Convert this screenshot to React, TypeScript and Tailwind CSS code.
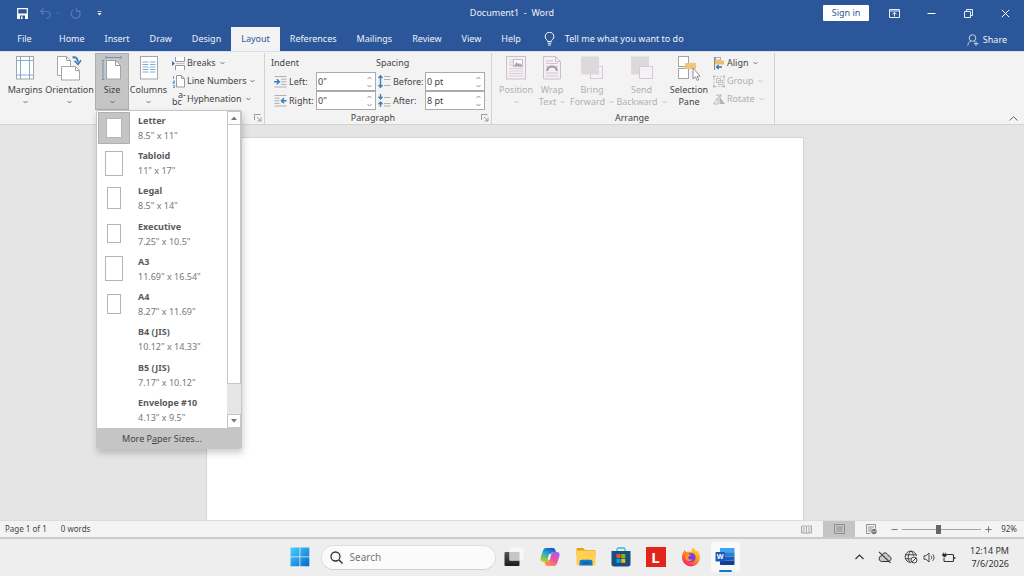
import React from 'react'

const tabsBefore = ['Home', 'Insert', 'Draw', 'Design']
const tabsAfter = ['References', 'Mailings', 'Review', 'View', 'Help']

const paperSizes = [
  { name: 'Letter', size: '8.5" x 11"', icon: 'w-[16px] h-[20px]' },
  { name: 'Tabloid', size: '11" x 17"', icon: 'w-[18px] h-[25px]' },
  { name: 'Legal', size: '8.5" x 14"', icon: 'w-[14px] h-[22px]' },
  { name: 'Executive', size: '7.25" x 10.5"', icon: 'w-[14px] h-[19px]' },
  { name: 'A3', size: '11.69" x 16.54"', icon: 'w-[18px] h-[25px]' },
  { name: 'A4', size: '8.27" x 11.69"', icon: 'w-[14px] h-[20px]' },
  { name: 'B4 (JIS)', size: '10.12" x 14.33"', icon: '' },
  { name: 'B5 (JIS)', size: '7.17" x 10.12"', icon: '' },
  { name: 'Envelope #10', size: '4.13" x 9.5"', icon: '' },
]

const Chevron: React.FC<{ up?: boolean }> = ({ up }) => (
  <svg width="5" height="4" viewBox="0 0 5 4" fill="none" stroke="currentColor" strokeWidth="0.7" className="shrink-0">
    <path d={up ? 'M0.5 3 2.5 1 4.5 3' : 'M0.5 1 2.5 3 4.5 1'} />
  </svg>
)

const Launcher: React.FC<{ label: string }> = ({ label }) => (
  <button aria-label={label}>
    <svg width="8" height="8" viewBox="0 0 8 8" fill="none" stroke="#888" strokeWidth="0.8">
      <path d="M0.5 6V0.5H6.5M3 3 7 7M7 3.5V7H3.5" />
    </svg>
  </button>
)

type BigProps = {
  lines: string[]
  icon: React.ReactNode
  width: string
  disabled?: boolean
  active?: boolean
  arrow?: boolean
}

const BigButton: React.FC<BigProps> = ({ lines, icon, width, disabled, active, arrow = true }) => (
  <button
    disabled={disabled}
    className={`flex h-[57px] flex-col items-center whitespace-nowrap pt-[3px] leading-[12px] ${width} ${disabled ? 'text-[#b1b1b1]' : 'text-[#444]'} ${active ? 'bg-[#c5c5c5] outline -outline-offset-1 outline-[#adadad]' : ''}`}
  >
    <span className="mb-1 flex h-[24px] items-center">{icon}</span>
    <span>{lines[0]}</span>
    <span className="flex h-[12px] items-center gap-[4px]">
      {lines[1]}
      {arrow && <Chevron />}
    </span>
  </button>
)

const SmallButton: React.FC<{ label: string; icon: React.ReactNode; disabled?: boolean }> = ({ label, icon, disabled }) => (
  <button disabled={disabled} className={`flex h-[18px] items-center gap-[2px] whitespace-nowrap ${disabled ? 'text-[#b1b1b1]' : 'text-[#444]'}`}>
    {icon}
    {label}
    <span className="ml-[2px] flex"><Chevron /></span>
  </button>
)

const SpinRow: React.FC<{ id: string; label: string; value: string; labelWidth: string; icon: React.ReactNode }> = ({ id, label, value, labelWidth, icon }) => (
  <div className="flex h-[19px] items-center">
    {icon}
    <label htmlFor={id} className={`pl-[2px] ${labelWidth}`}>{label}</label>
    <span className="flex h-[19px] w-[60px] items-center border border-[#ababab] bg-white pr-[3px]">
      <input id={id} type="text" defaultValue={value} className="w-0 flex-1 bg-transparent pl-px outline-none" />
      <span className="flex flex-col gap-[4px] text-[#666]">
        <button aria-label={`Increase ${label}`}><Chevron up /></button>
        <button aria-label={`Decrease ${label}`}><Chevron /></button>
      </span>
    </span>
  </div>
)

const Svg: React.FC<{ w: number; h: number; children: React.ReactNode }> = ({ w, h, children }) => (
  <svg width={w} height={h} viewBox={`0 0 ${w} ${h}`} fill="none" className="shrink-0">{children}</svg>
)

const MarginsIcon = () => (
  <Svg w={18} h={24}>
    <rect x="0.5" y="0.5" width="17" height="22.5" fill="#fff" stroke="#a5a5a5" />
    <path d="M4.5 1v22M13.5 1v22M1 4.5h16M1 19h16" stroke="#6fa3d3" strokeWidth="0.9" />
  </Svg>
)

const OrientationIcon = () => (
  <Svg w={25} h={25}>
    <path d="M0.5 0.5h9l4 4V19.5h-13z" fill="#fff" stroke="#a5a5a5" />
    <path d="M9.5 0.5v4h4" stroke="#a5a5a5" />
    <path d="M4.5 10.5h14l4 4v9.5h-18z" fill="#fff" stroke="#a5a5a5" />
    <path d="M18.5 10.5v4h4" stroke="#a5a5a5" />
    <path d="M15.5 1.5c3-1 5.5.8 5.5 5" stroke="#3f80bf" strokeWidth="2" />
    <path d="M17.5 4.8 21 8.5 24 4.2" stroke="#3f80bf" strokeWidth="1.6" />
  </Svg>
)

const SizeIcon = () => (
  <Svg w={20} h={24}>
    <path d="M4 1.5h15M4 0v3M19 0v3M1 4.5v19M0 4.5h2.5M0 23.5h2.5" stroke="#5b8fc2" strokeWidth="0.9" />
    <path d="M4.5 4.5h9l5 5v13.5h-14z" fill="#fff" stroke="#a5a5a5" />
    <path d="M13.5 4.5v5h5" stroke="#999" />
  </Svg>
)

const ColumnsIcon = () => (
  <Svg w={18} h={24}>
    <rect x="0.5" y="0.5" width="17" height="22.5" fill="#fff" stroke="#a5a5a5" />
    <path d="M2.5 6h6M2.5 8.5h6M2.5 11h6M2.5 13.5h6M2.5 16h6M10 6h5.5M10 8.5h5.5M10 11h5.5M10 13.5h5.5M10 16h5.5" stroke="#7fb0dc" />
  </Svg>
)

const BreaksIcon = () => (
  <Svg w={13} h={13}>
    <path d="M3.5 0v4.5h9V0M3.5 13V8.5h9V13" fill="#fff" stroke="#999" />
    <path d="M4.5 6.5h8" stroke="#aaa" strokeDasharray="2 1" />
    <path d="M0 4v5l3-2.5z" fill="#3a78b5" />
  </Svg>
)

const LineNumbersIcon = () => (
  <Svg w={13} h={13}>
    <path d="M1.5 1v3M1 6h1.5v1.5H1v1h1.5M1 10.5h1.5v2H1" stroke="#5b8fc2" strokeWidth="0.9" />
    <path d="M4.5 0.5h5l3 3v8.5h-8z" fill="#fff" stroke="#999" />
    <path d="M9.5 0.5v3h3" stroke="#999" />
  </Svg>
)

const HyphenIcon = () => (
  <span className="flex h-[14px] w-[13px] shrink-0 flex-col text-[#444]">
    <span className="pl-[6px] text-left leading-[5px]">a-</span>
    <span className="text-left leading-[9px]">bc</span>
  </span>
)

const IndentIcon: React.FC<{ right?: boolean }> = ({ right }) => (
  <Svg w={13} h={12}>
    <path d="M0.5 0.5h12M0.5 11h12" stroke="#b0b0b0" />
    <path d={right ? 'M0.5 3.2h5M0.5 5.8h5M0.5 8.4h5' : 'M7 3.2h5.5M7 5.8h5.5M7 8.4h5.5'} stroke="#b0b0b0" />
    <path d={right ? 'M12.5 5.8h-5M10 3.3 7.5 5.8 10 8.3' : 'M0 5.8h5M2.8 3.3 5.3 5.8 2.8 8.3'} stroke="#3f80bf" strokeWidth="1.6" />
  </Svg>
)

const SpacingIcon: React.FC<{ after?: boolean }> = ({ after }) => (
  <Svg w={13} h={13}>
    <path d={after ? 'M6 3.5h6.5M6 9.5h6.5M6 12h6.5' : 'M6 1.5h6.5M6 4.5h6.5M6 10.5h6.5'} stroke="#b0b0b0" />
    {after ? (
      <path d="M2.5 0v5M0.5 2.7 2.5 5l2-2.3M2.5 13V8M0.5 10.3 2.5 8l2 2.3" stroke="#3f80bf" strokeWidth="1.4" />
    ) : (
      <path d="M2.5 0.5v12M0.5 3 2.5 0.7 4.5 3M0.5 10 2.5 12.3 4.5 10" stroke="#3f80bf" strokeWidth="1.4" />
    )}
  </Svg>
)

const PositionIcon = () => (
  <Svg w={20} h={24}>
    <rect x="0.5" y="0.5" width="19" height="22.5" fill="#f6f0f6" stroke="#c9c3c9" />
    <path d="M3 4h4M3 6.5h4M3 9h4M3 12.5h14M3 15h14M3 17.5h14M3 20h14" stroke="#d8d2d8" />
    <rect x="7.5" y="3.5" width="9" height="7" fill="#fff" stroke="#c3bdc3" />
    <path d="M8 10l2.5-4 2 2 1.5-1 2.5 3z" fill="#aaa4aa" />
  </Svg>
)

const WrapIcon = () => (
  <Svg w={18} h={24}>
    <path d="M0.5 0.5h12l5 5V23h-17z" fill="#f6f0f6" stroke="#c9c3c9" />
    <path d="M12.5 0.5v5h5" stroke="#c9c3c9" />
    <path d="M3 5h7M3 7.5h12M3 17h12M3 20h12M3 10.5h2M13 10.5h2" stroke="#cfc9cf" />
    <path d="M4 15c1-6 9-6 10 0" stroke="#a09aa0" strokeWidth="2" />
  </Svg>
)

const BringIcon = () => (
  <Svg w={22} h={24}>
    <rect x="9.5" y="10.5" width="12" height="12" fill="#f7f1f7" stroke="#d3cdd3" />
    <rect x="0" y="0.5" width="18" height="18" fill="#dcd8dc" />
  </Svg>
)

const SendIcon = () => (
  <Svg w={22} h={24}>
    <rect x="0" y="0.5" width="18" height="18" fill="#dcd8dc" />
    <rect x="8.5" y="10.5" width="13" height="12" fill="#f7f1f7" stroke="#d3cdd3" />
  </Svg>
)

const SelectionIcon = () => (
  <Svg w={22} h={25}>
    <rect x="0.5" y="0.5" width="10" height="10" fill="#fff" stroke="#a5a5a5" />
    <rect x="0.5" y="12.5" width="10" height="10" fill="#fff" stroke="#a5a5a5" />
    <path d="M7 7h11v6H7z" fill="#efc57b" />
    <path d="M15 12v11l2.5-2.2 1.7 3.7 1.6-.8-1.7-3.5H22z" fill="#fff" stroke="#777" strokeWidth="0.8" />
  </Svg>
)

const AlignIcon = () => (
  <Svg w={12} h={13}>
    <path d="M1.5 0v13" stroke="#888" />
    <rect x="2.5" y="0.5" width="5" height="2.5" fill="#fff" stroke="#999" strokeWidth="0.8" />
    <rect x="2" y="3.5" width="9" height="4" fill="#edbd6c" />
    <path d="M9 10H3.5M5.7 8 3.5 10l2.2 2" stroke="#2f74b5" strokeWidth="1.3" />
  </Svg>
)

const GroupIcon = () => (
  <Svg w={12} h={13}>
    <rect x="1" y="1.5" width="10" height="10" stroke="#c4c4c4" strokeDasharray="2 1" />
    <rect x="3.5" y="3.5" width="4" height="4" stroke="#c4c4c4" />
    <rect x="5.5" y="5.5" width="4" height="4" stroke="#c4c4c4" />
    <path d="M0 0.5h2v2H0zM10 0.5h2v2h-2zM0 10.5h2v2H0zM10 10.5h2v2h-2z" fill="#b9b9b9" />
  </Svg>
)

const RotateIcon = () => (
  <Svg w={12} h={13}>
    <path d="M0.5 11 5 4.5V11z" stroke="#bbb" />
    <path d="M6.5 11V3.5L12 11z" fill="#b5b5b5" />
    <path d="M3 3c1-1.5 3-1.5 4.5 0M7.8 1v2.3H5.5" stroke="#b5b5b5" />
  </Svg>
)

const GroupFooter: React.FC<{ label?: string; launcher?: string }> = ({ label, launcher }) => (
  <div className="flex h-[14px] items-center pr-[2px] pt-[2px]">
    <span className="flex-1 text-center">{label}</span>
    {launcher && <Launcher label={launcher} />}
  </div>
)

const SizeMenu = () => (
  <div role="menu" className="absolute left-px top-[57px] z-10 w-[146px] rounded-[2px] border border-[#c6c6c6] bg-white text-left shadow-[1px_4px_7px_rgba(0,0,0,0.2)]">
    <div className="flex h-[317px]">
      <div className="grid flex-1 auto-rows-fr">
        {paperSizes.map((p, i) => (
          <button key={p.name} role="menuitem" className="flex items-start gap-[8px] pl-px pt-[2px] text-left">
            <span className={`-mt-px flex h-[32px] w-[32px] items-center justify-center ${i === 0 ? 'bg-[#c5c5c5] outline -outline-offset-1 outline-[#b0b0b0]' : ''}`}>
              {p.icon && <span className={`border border-[#b5b5b5] bg-white ${p.icon}`} />}
            </span>
            <span className="flex flex-col leading-[15px] text-[#777]">
              <b className="font-bold text-[#5a5a5a]">{p.name}</b>
              <span>{p.size}</span>
            </span>
          </button>
        ))}
      </div>
      <div className="flex w-[14px] flex-col bg-[#e6e6e6]">
        <button aria-label="Scroll up" className="flex h-[14px] items-center justify-center border border-[#c6c6c6] bg-white">
          <svg width="6" height="4" viewBox="0 0 6 4"><path d="M0 4 3 0.5 6 4z" fill="#777" /></svg>
        </button>
        <div className="h-[259px] border border-t-0 border-[#c6c6c6] bg-white" />
        <div className="flex-1" />
        <button aria-label="Scroll down" className="flex h-[14px] items-center justify-center border border-[#c6c6c6] bg-white">
          <svg width="6" height="4" viewBox="0 0 6 4"><path d="M0 0 3 3.5 6 0z" fill="#777" /></svg>
        </button>
      </div>
    </div>
    <button role="menuitem" className="flex h-[20px] w-full items-center bg-[#c5c5c5] pl-[25px] pt-px text-[#444]">
      <span>More P<u>a</u>per Sizes...</span>
    </button>
  </div>
)

const TitleBar = () => (
  <header className="grid h-[26px] grid-cols-[1fr_auto_1fr] items-center">
    <div className="flex items-center pl-[17px]">
      <button aria-label="Save">
        <Svg w={11} h={11}>
          <path d="M0.7 0.7h9.6v9.6H0.7z" stroke="#fff" strokeWidth="1.2" />
          <path d="M0.5 5.5h10V11h-10z" fill="#fff" />
          <path d="M3 7.5h5V11H3z" fill="#2b579a" />
          <path d="M4 8.5h1.5V11H4z" fill="#fff" />
        </Svg>
      </button>
      <button aria-label="Undo" className="ml-3 text-[#5578b0]">
        <Svg w={11} h={11}>
          <path d="M3.5 0.5.8 3.5l2.7 3M1 3.5h5.5c5 0 5 6.5 0 7" stroke="currentColor" strokeWidth="1.2" />
        </Svg>
      </button>
      <span className="ml-[5px] text-[#5578b0]"><Chevron /></span>
      <button aria-label="Redo" className="ml-[9px] text-[#5578b0]">
        <Svg w={11} h={11}>
          <path d="M3.5 1.7A4.5 4.5 0 1 0 8.5 2.2M6.5 0v3.3h4" stroke="currentColor" strokeWidth="1.2" />
        </Svg>
      </button>
      <button aria-label="Customize Quick Access Toolbar" className="ml-[16px]">
        <Svg w={5} h={5}><path d="M0.5 0.5h4" stroke="#fff" strokeWidth="0.7" /><path d="M0.5 2h4L2.5 4.5z" fill="#fff" /></Svg>
      </button>
    </div>
    <h1 className="whitespace-pre text-[#eef2f8]">Document1  -  Word</h1>
    <div className="flex items-center justify-end text-white">
      <button className="mr-[7px] h-[16px] w-[46px] rounded-[1px] bg-white text-[#2b579a]">Sign in</button>
      <button aria-label="Ribbon Display Options" className="flex w-[37px] justify-center">
        <Svg w={11} h={9}><path d="M0.5 0.5h10v8H0.5zM0.5 2h10M5.5 7.5V3.5M3.5 5.3l2-2 2 2" stroke="#fff" strokeWidth="0.9" /></Svg>
      </button>
      <button aria-label="Minimize" className="flex w-[37px] justify-center">
        <Svg w={9} h={9}><path d="M0.5 4.5h8" stroke="#fff" /></Svg>
      </button>
      <button aria-label="Restore" className="flex w-[37px] justify-center">
        <Svg w={9} h={9}><path d="M0.5 2.5h6v6h-6zM2.5 2.5v-2h6v6h-2" stroke="#fff" strokeWidth="0.9" /></Svg>
      </button>
      <button aria-label="Close" className="flex w-[37px] justify-center">
        <Svg w={9} h={9}><path d="M0.8 0.8 8.2 8.2M8.2 0.8.8 8.2" stroke="#fff" /></Svg>
      </button>
    </div>
  </header>
)

const TabBar = () => (
  <nav className="flex h-[24px] items-stretch whitespace-nowrap text-[#eef2f8]">
    <button className="w-[49px]">File</button>
    {tabsBefore.map((t) => <button key={t} className="px-[10px]">{t}</button>)}
    <button className="bg-[#f3f3f3] px-[10px] text-[#2b579a]">Layout</button>
    {tabsAfter.map((t) => <button key={t} className="px-[10px]">{t}</button>)}
    <button className="ml-[13px] flex items-center gap-[10px]">
      <Svg w={11} h={14}>
        <path d="M3.7 9.5C3.7 8 1.2 7 1.2 4.5a4.3 4.3 0 0 1 8.6 0C9.8 7 7.3 8 7.3 9.5zM3.7 11.2h3.6M4.2 13h2.6" stroke="#fff" />
      </Svg>
      Tell me what you want to do
    </button>
    <button className="ml-auto mr-[17px] flex items-center gap-[4px] pt-px">
      <Svg w={12} h={12}>
        <circle cx="5.5" cy="4" r="3.3" stroke="#c3d1e6" />
        <path d="M0.8 11.5C1 9 2.5 7.5 4 7M7 7l1 .8M9 7.5v4.5M6.8 9.7h4.7" stroke="#c3d1e6" />
      </Svg>
      Share
    </button>
  </nav>
)

const Ribbon = () => (
  <section className="flex h-[74px] border-b border-t border-b-[#d2d2d2] border-t-[#d5dff0] bg-[#f3f3f3] pt-px text-[#444]">
    <div className="flex w-[265px] flex-col border-r border-[#d2d2d2]" aria-label="Page Setup">
      <div className="flex h-[58px] pl-[6px]">
        <BigButton lines={['Margins']} icon={<MarginsIcon />} width="w-[38px]" />
        <BigButton lines={['Orientation']} icon={<OrientationIcon />} width="w-[51px]" />
        <div className="relative">
          <BigButton lines={['Size']} icon={<SizeIcon />} width="w-[34px]" active />
          <SizeMenu />
        </div>
        <BigButton lines={['Columns']} icon={<ColumnsIcon />} width="w-[39px]" />
        <div className="flex flex-col pl-[4px] pt-px">
          <SmallButton label="Breaks" icon={<BreaksIcon />} />
          <SmallButton label="Line Numbers" icon={<LineNumbersIcon />} />
          <SmallButton label="Hyphenation" icon={<HyphenIcon />} />
        </div>
      </div>
      <GroupFooter launcher="Page Setup settings" />
    </div>

    <div className="flex w-[227px] flex-col border-r border-[#d2d2d2]">
      <div className="flex h-[58px] pl-[6px]">
        <div className="w-[105px]">
          <h2 className="h-[19px] leading-[19px]">Indent</h2>
          <div className="pl-[3px]">
            <SpinRow id="left" label="Left:" value={'0"'} labelWidth="w-[29px]" icon={<IndentIcon />} />
            <SpinRow id="right" label="Right:" value={'0"'} labelWidth="w-[29px]" icon={<IndentIcon right />} />
          </div>
        </div>
        <div>
          <h2 className="h-[19px] leading-[19px]">Spacing</h2>
          <div className="pl-[2px]">
            <SpinRow id="before" label="Before:" value="0 pt" labelWidth="w-[34px]" icon={<SpacingIcon />} />
            <SpinRow id="after" label="After:" value="8 pt" labelWidth="w-[34px]" icon={<SpacingIcon after />} />
          </div>
        </div>
      </div>
      <GroupFooter label="Paragraph" launcher="Paragraph settings" />
    </div>

    <div className="flex w-[283px] flex-col border-r border-[#d2d2d2]">
      <div className="flex h-[58px] pl-[4px]">
        <BigButton lines={['Position']} icon={<PositionIcon />} width="w-[40px]" disabled />
        <BigButton lines={['Wrap', 'Text']} icon={<WrapIcon />} width="w-[32px]" disabled />
        <BigButton lines={['Bring', 'Forward']} icon={<BringIcon />} width="w-[48px]" disabled />
        <BigButton lines={['Send', 'Backward']} icon={<SendIcon />} width="w-[51px]" disabled />
        <BigButton lines={['Selection', 'Pane']} icon={<SelectionIcon />} width="w-[44px]" arrow={false} />
        <div className="flex flex-col pl-[2px] pt-px">
          <SmallButton label="Align" icon={<AlignIcon />} />
          <SmallButton label="Group" icon={<GroupIcon />} disabled />
          <SmallButton label="Rotate" icon={<RotateIcon />} disabled />
        </div>
      </div>
      <GroupFooter label="Arrange" />
    </div>
    <button aria-label="Collapse the Ribbon" className="ml-auto mr-[6px] self-end pb-[3px]">
      <Svg w={9} h={5}><path d="M0.5 4.5 4.5 0.7 8.5 4.5" stroke="#666" /></Svg>
    </button>
  </section>
)

const StatusBar = () => (
  <footer className="flex h-[19px] items-center border-b-2 border-t border-b-[#cbcbcb] border-t-[#dcdcdc] bg-[#f3f3f3] pl-[5px] pr-[7px] text-[8px] text-[#444]">
    <span>Page 1 of 1</span>
    <span className="ml-[14px]">0 words</span>
    <div className="ml-auto flex h-full items-center">
      <button aria-label="Read Mode" className="flex w-[33px] justify-center">
        <Svg w={11} h={9}><path d="M5.5 1.5v7M0.5 1h4l1 .5 1-.5h4v7h-4l-1 .5-1-.5h-4zM1.5 3h2.5M1.5 5h2.5M1.5 7h2.5M7 3h2.5M7 5h2.5M7 7h2.5" stroke="#999" strokeWidth="0.8" /></Svg>
      </button>
      <button aria-label="Print Layout" className="flex h-full w-[32px] items-center justify-center bg-[#c5c5c5]">
        <Svg w={11} h={10}><path d="M0.5 0.5h10v9H0.5zM2.5 3h6M2.5 5h6M2.5 7h6" stroke="#888" strokeWidth="0.9" /></Svg>
      </button>
      <button aria-label="Web Layout" className="flex w-[33px] justify-center">
        <Svg w={11} h={11}>
          <path d="M4.5 9.5h-4v-9h9v4M2 3h6M2 5h4M2 7h3" stroke="#888" strokeWidth="0.9" />
          <circle cx="8" cy="7.5" r="2.7" fill="#777" />
          <path d="M6 7.5c1-1 2 1 4-.5" stroke="#ddd" strokeWidth="0.7" />
        </Svg>
      </button>
      <button aria-label="Zoom Out" className="ml-[3px] flex">
        <Svg w={7} h={7}><path d="M0.5 3.5h6" stroke="#777" /></Svg>
      </button>
      <input
        type="range"
        aria-label="Zoom"
        min="0"
        max="100"
        defaultValue="46"
        className="ml-[4px] h-[9px] w-[79px] appearance-none bg-transparent [&::-webkit-slider-runnable-track]:h-px [&::-webkit-slider-runnable-track]:bg-[#a5a5a5] [&::-webkit-slider-thumb]:-mt-[4px] [&::-webkit-slider-thumb]:h-[9px] [&::-webkit-slider-thumb]:w-[5px] [&::-webkit-slider-thumb]:appearance-none [&::-webkit-slider-thumb]:bg-[#666]"
      />
      <button aria-label="Zoom In" className="ml-[4px] flex">
        <Svg w={7} h={7}><path d="M0.5 3.5h6M3.5 0.5v6" stroke="#777" /></Svg>
      </button>
      <button className="ml-[9px]">92%</button>
    </div>
  </footer>
)

const TaskBar = () => (
  <div className="grid h-[37px] grid-cols-[1fr_auto_1fr] items-center bg-[#eee] pb-px text-[#333]">
    <div />
    <div className="flex items-center pl-[5px]">
      <button aria-label="Start">
        <Svg w={20} h={20}>
          <defs>
            <linearGradient id="win" x1="0" y1="0" x2="1" y2="1">
              <stop offset="0" stopColor="#4fd0fb" />
              <stop offset="1" stopColor="#0069cf" />
            </linearGradient>
          </defs>
          <path d="M0.5 0.5h9v9h-9zM10.3 0.5h9v9h-9zM0.5 10.3h9v9h-9zM10.3 10.3h9v9h-9z" fill="url(#win)" />
        </Svg>
      </button>
      <label className="ml-[11px] flex h-[25px] w-[175px] items-center rounded-full border border-[#e0e0e0] border-b-[#cfcfcf] bg-[#fbfbfb] pl-[8px]">
        <Svg w={13} h={13}><circle cx="5.5" cy="5.5" r="4.5" stroke="#333" strokeWidth="1.3" /><path d="m9 9 3.5 3.5" stroke="#333" strokeWidth="1.5" /></Svg>
        <input type="text" placeholder="Search" aria-label="Search" className="ml-[7px] w-[100px] bg-transparent text-[10px] placeholder-[#777] outline-none" />
      </label>
      <div className="flex items-center">
        <button aria-label="Task View" className="flex w-[36px] justify-center">
          <Svg w={20} h={20}>
            <defs><linearGradient id="tv" x1="0" y1="0" x2="0" y2="1"><stop offset="0" stopColor="#555" /><stop offset="1" stopColor="#1c1c1c" /></linearGradient></defs>
            <rect x="0.5" y="5" width="15" height="14" rx="1" fill="url(#tv)" />
            <rect x="5.5" y="0.5" width="14" height="13" rx="1" fill="#f7f7f7" />
            <rect x="5.5" y="5" width="10" height="8.5" fill="#c6c6c6" />
          </Svg>
        </button>
        <button aria-label="Copilot" className="flex w-[37px] justify-center">
          <Svg w={20} h={20}>
            <defs>
              <linearGradient id="cpa" x1="0.6" y1="0" x2="0.2" y2="1"><stop offset="0" stopColor="#1559d6" /><stop offset="0.45" stopColor="#23b3c9" /><stop offset="0.75" stopColor="#7cc84c" /><stop offset="1" stopColor="#f3c51c" /></linearGradient>
              <linearGradient id="cpb" x1="0.8" y1="0" x2="0.3" y2="1"><stop offset="0" stopColor="#a35cf0" /><stop offset="0.5" stopColor="#e8549f" /><stop offset="1" stopColor="#fb9448" /></linearGradient>
            </defs>
            <path d="M6 1h7c1.5 0 2 1 2.5 2.5L16 5h-2.5c-1.5 0-2.2.8-2.7 2.3L9 13c-.5 1.5-1.2 2-2.5 2H3.2C.8 15 0 13 .6 10.8L2.8 4C3.5 2 4.3 1 6 1z" fill="url(#cpa)" />
            <path d="M14 19H7.5C6 19 5.5 18 5 16.5L4.5 15h2.3c1.5 0 2.2-.8 2.7-2.3L11.2 7c.5-1.5 1.2-2 2.5-2h3.1c2.4 0 3.2 2 2.6 4.2L17.2 16c-.7 2-1.5 3-3.2 3z" fill="url(#cpb)" />
            <path d="M9 7h2.2L9.8 12.8H7.5z" fill="#eee" />
          </Svg>
        </button>
        <button aria-label="File Explorer" className="flex w-[34px] justify-center">
          <Svg w={20} h={20}>
            <path d="M0.5 2.5C.5 1.5 1 1 2 1h5l2 2h9c1 0 1.5.5 1.5 1.5V9h-19z" fill="#e0a010" />
            <rect x="0.5" y="3.5" width="19" height="15" rx="1.2" fill="#ffd152" />
            <path d="M3.5 18.5V15c0-1.5.8-2.3 2.2-2.3h8.6c1.4 0 2.2.8 2.2 2.3v3.5z" fill="#1478c8" />
            <path d="M6.5 16h7" stroke="#0b4d8c" />
          </Svg>
        </button>
        <button aria-label="Microsoft Store" className="flex w-[36px] justify-center">
          <Svg w={20} h={20}>
            <path d="M6 4V2.5C6 1.5 6.5 1 7.5 1h5c1 0 1.5.5 1.5 1.5V4" stroke="#38b5ea" strokeWidth="1.3" />
            <path d="M0.5 4h19v13c0 1.5-.8 2.5-2.5 2.5H3C1.3 19.5.5 18.5.5 17z" fill="#17507f" />
            <path d="M5.5 7h4v4h-4z" fill="#f25022" /><path d="M10.3 7h4v4h-4z" fill="#7fba00" />
            <path d="M5.5 11.8h4v4h-4z" fill="#00a4ef" /><path d="M10.3 11.8h4v4h-4z" fill="#ffb900" />
          </Svg>
        </button>
        <button className="ml-[7px] mr-[8px] h-[20px] w-[20px] bg-[#e1251b] text-[15px] font-bold leading-[20px] text-white">L</button>
        <button aria-label="Firefox" className="flex w-[34px] justify-center">
          <Svg w={20} h={20}>
            <defs><linearGradient id="ff" x1="0.9" y1="0" x2="0.2" y2="1"><stop offset="0" stopColor="#ffe83c" /><stop offset="0.45" stopColor="#ff9a1e" /><stop offset="0.8" stopColor="#ff3f55" /><stop offset="1" stopColor="#e41f7b" /></linearGradient></defs>
            <path d="M12 .5c2 1.5 2.5 2.5 3 4 .8-.2 1-.8 1-1.5 2 2 3 4.5 3 7.500a9 9 0 0 1-18 0C1 7.5 2 5.5 3 4.2L3.5 3l1.8 2C7 4.5 9.5 5 10.5 5 10.3 3 11 1.5 12 .5z" fill="url(#ff)" />
            <circle cx="10" cy="10.5" r="4.6" fill="#7a3fe0" />
            <path d="M4.5 8C6 6.5 8.5 7 10 8.5c-1 .2-1.5 1-3 1.2 0 2.5 2.5 3.5 4.5 2.5-1 3-7 2.5-7.5-2z" fill="#ff9a1e" />
          </Svg>
        </button>
        <button aria-label="Word" className="ml-[3px] flex h-[30px] w-[29px] flex-col items-center justify-between rounded-[3px] bg-[#f9f9f9] pt-[5px]">
          <Svg w={20} h={19}>
            <path d="M5 1h13.5c.6 0 1 .4 1 1v3.5H5z" fill="#41a5ee" /><path d="M5 5.3h14.5v4.2H5z" fill="#2b7cd3" />
            <path d="M5 9.5h14.5v4H5z" fill="#185abd" /><path d="M5 13.5h14.5V17c0 .6-.4 1-1 1H6c-.6 0-1-.4-1-1z" fill="#103f91" />
            <rect x="0.5" y="5" width="9.5" height="9.5" rx="0.8" fill="#185abd" />
            <text x="5.2" y="12.3" textAnchor="middle" fontSize="7" fontWeight="700" fill="#fff">W</text>
          </Svg>
          <span className="h-[2px] w-[13px] rounded bg-[#0f78d4]" />
        </button>
      </div>
    </div>
    <div className="flex items-center justify-end pr-[15px]">
      <button aria-label="Show hidden icons"><Svg w={9} h={6}><path d="M0.5 5 4.5 1 8.5 5" stroke="#333" strokeWidth="1.2" /></Svg></button>
      <button aria-label="OneDrive" className="ml-[14px]">
        <Svg w={14} h={12}>
          <path d="M3.5 10.5a2.9 2.9 0 0 1 0-5.7C4.5 1 9.5 1 10.3 4.8c3.5 0 3.7 5.7 0 5.7z" fill="#c9c9c9" stroke="#333" />
          <path d="m1 0.8 11.5 11" stroke="#333" strokeWidth="1.1" />
        </Svg>
      </button>
      <button aria-label="Network" className="ml-[12px]">
        <Svg w={14} h={14}>
          <path d="M7 12.5A5.7 5.7 0 1 1 12.5 6M1.2 4.8h11M1.2 8.8h5.5M7 1C3.5 4 3.5 9.5 6 12.3M7 1c1.7 1.5 2.3 3 2.5 4.5" stroke="#333" strokeWidth="0.9" />
          <circle cx="10" cy="10" r="3" stroke="#333" strokeWidth="0.9" /><path d="m8 12 4-4" stroke="#333" strokeWidth="0.9" />
        </Svg>
      </button>
      <button aria-label="Volume" className="ml-[5px]">
        <Svg w={13} h={11}>
          <path d="M1 3.8h2L6 1v9L3 7.3H1z" stroke="#333" strokeWidth="0.9" /><path d="M8 3.8c.9 1 .9 2.5 0 3.5M9.7 2.3c1.8 2 1.8 4.5 0 6.5" stroke="#333" strokeWidth="0.9" />
        </Svg>
      </button>
      <button aria-label="Battery" className="ml-[6px]">
        <Svg w={14} h={11}>
          <path d="M5 2.5h5.5c.6 0 1 .4 1 1v5c0 .6-.4 1-1 1H3c-.6 0-1-.4-1-1V6M12.8 5v2" stroke="#333" strokeWidth="1.1" />
          <path d="M1.5 0.5v2M3.5 0.5v2M0.5 2h4v1.5L3 5H2L.5 3.5z" fill="#333" stroke="#333" strokeWidth="0.6" />
        </Svg>
      </button>
      <div className="ml-[14px] text-right leading-[13px]">
        <p className="whitespace-nowrap">12:14 PM</p>
        <p>7/6/2026</p>
      </div>
    </div>
  </div>
)

export default function App() {
  return (
    <div className="flex min-h-screen flex-col bg-[#e5e5e5] text-[9px] leading-[12px] [font-family:'Noto_Sans','Open_Sans',sans-serif]">
      <div className="flex flex-col gap-px bg-[#2b579a]">
        <TitleBar />
        <TabBar />
      </div>
      <Ribbon />
      <main className="flex flex-1 justify-center pr-[14px] pt-[12px]">
        <div className="w-[598px] border border-b-0 border-[#d4d4d4] bg-white" />
      </main>
      <StatusBar />
      <TaskBar />
    </div>
  )
}
